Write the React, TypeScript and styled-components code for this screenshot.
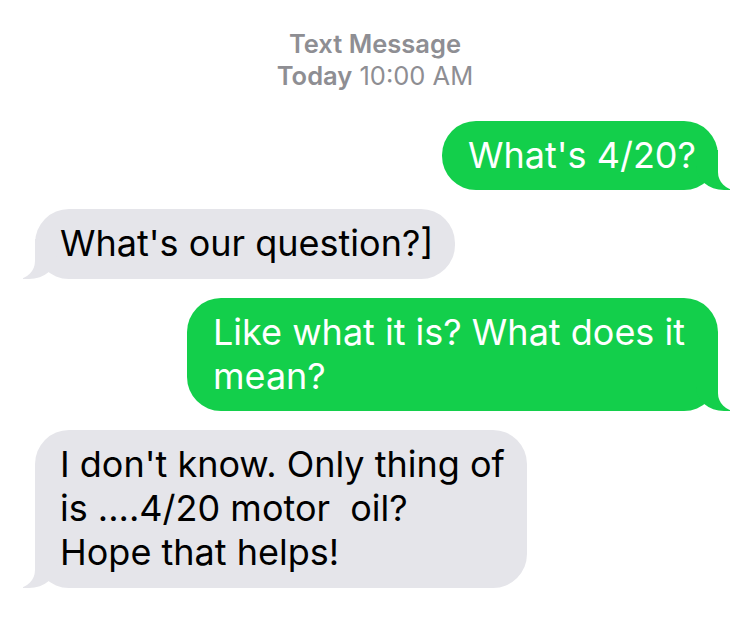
import styled, { createGlobalStyle, css } from 'styled-components'

//#region STYLE
const GlobalStyle = createGlobalStyle`
	html, body {
		margin: 0;
		padding: 0;
		background: #fff;
	}
	body {
		font-family: Inter, "Liberation Sans", Arial, sans-serif;
	}
`

const Screen = styled.div`
	width: 750px;
	height: 634px;
	background: #fff;
	overflow: hidden;
	display: flex;
	flex-direction: column;
`

const Header = styled.div`
	padding-top: 28px;
	text-align: center;
	color: #8e8e93;
	font-size: 25.5px;
	line-height: 32px;
	.strong {
		font-weight: 600;
	}
`

const Thread = styled.div`
	display: flex;
	flex-direction: column;
	gap: 19px;
	padding: 29px 32px 0 35px;
`

const green = '#13cf4b'
const gray = '#e5e5ea'

const Bubble = styled.div<{ $mine?: boolean }>`
	position: relative;
	box-sizing: border-box;
	max-width: 531px;
	padding: 12px 22px 13px 26px;
	border-radius: 34px;
	font-size: 36px;
	line-height: 44px;
	white-space: pre-wrap;

	&::before, &::after {
		content: '';
		position: absolute;
		bottom: 0;
		height: 40px;
	}

	${p => p.$mine
		? css`
			align-self: flex-end;
			background: ${green};
			color: #fff;
			&::before {
				right: -12px;
				width: 34px;
				background: ${green};
				border-bottom-left-radius: 28px 24px;
			}
			&::after {
				right: -44px;
				width: 44px;
				background: #fff;
				border-bottom-left-radius: 18px;
			}
		`
		: css`
			align-self: flex-start;
			background: ${gray};
			color: #000;
			padding: 12px 22px 14px 25px;
			&::before {
				left: -12px;
				width: 34px;
				background: ${gray};
				border-bottom-right-radius: 28px 24px;
			}
			&::after {
				left: -44px;
				width: 44px;
				background: #fff;
				border-bottom-right-radius: 18px;
			}
		`}
`
//#endregion

type Message = { mine: boolean; text: string }

const messages: Message[] = [
	{ mine: true, text: "What's 4/20?" },
	{ mine: false, text: "What's our question?]" },
	{ mine: true, text: 'Like what it is? What does it mean?' },
	{ mine: false, text: "I don't know. Only thing of\nis ....4/20 motor  oil?\nHope that helps!" },
]

const App = () => {
	return (
		<Screen>
			<GlobalStyle />
			<Header>
				<div className='strong'>Text Message</div>
				<div><span className='strong'>Today</span> 10:00 AM</div>
			</Header>
			<Thread>
				{messages.map((m, i) => (
					<Bubble key={i} $mine={m.mine}>
						{m.text}
					</Bubble>
				))}
			</Thread>
		</Screen>
	)
}

export default App
